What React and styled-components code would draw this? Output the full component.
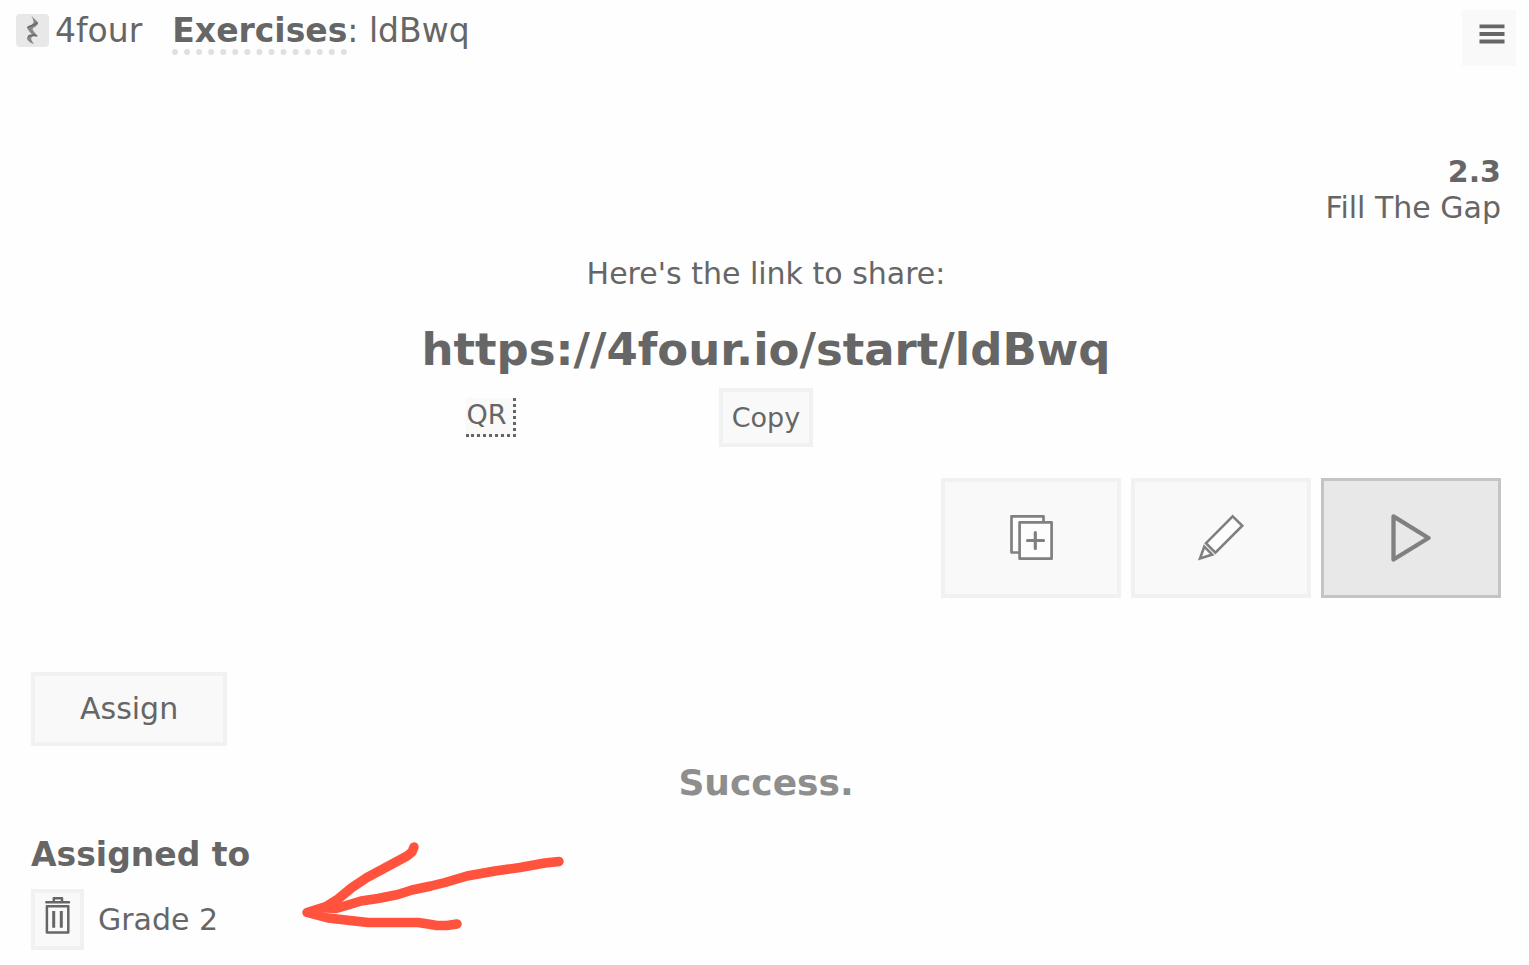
import React from 'react';
import styled, { createGlobalStyle, css } from 'styled-components';

const GlobalStyle = createGlobalStyle`
  * {
    box-sizing: border-box;
  }

  body {
    margin: 0;
    background: #fefefe;
    color: #666;
    font-family: 'DejaVu Sans', Verdana, sans-serif;
    font-size: 30px;
    line-height: 36px;
  }
`;

const Page = styled.div`
  padding: 10px 13px 15px 16px;
`;

const Header = styled.header`
  display: flex;
  justify-content: space-between;
  align-items: flex-start;
  font-size: 33px;
  line-height: 41px;
`;

const Breadcrumb = styled.nav`
  display: flex;
  align-items: flex-start;
  gap: 30px;
`;

const Brand = styled.a`
  display: flex;
  align-items: center;
  gap: 6px;
  color: inherit;
  text-decoration: none;
`;

const SectionLink = styled.a`
  display: inline-block;
  color: inherit;
  font-weight: bold;
  line-height: 37px;
  text-decoration: none;
  border-bottom: 6px dotted #e0e0e0;
`;

const buttonBase = css`
  margin: 0;
  color: #666;
  background: #f9f9f9;
  font-family: inherit;
  cursor: pointer;

  svg {
    display: block;
  }
`;

const MenuButton = styled.button`
  ${buttonBase}
  padding: 13px 11px 21px 17px;
  border: 0;
`;

const Main = styled.main`
  padding: 88px 15px 0;
`;

const Exercise = styled.div`
  text-align: right;
`;

const Share = styled.section`
  margin-top: 30px;
  text-align: center;

  p {
    margin: 0;
  }
`;

const ShareUrl = styled.h1`
  margin: 30px 0 11px;
  font-size: 45px;
  line-height: 55px;
`;

const ShareActions = styled.div`
  display: grid;
  grid-template-columns: repeat(3, 1fr);
  justify-items: center;
  align-items: center;
  max-width: 825px;
  margin: 0 auto;
`;

const QrButton = styled.button`
  ${buttonBase}
  padding: 0 6px 3px 0;
  border: 0 dotted #666;
  border-width: 0 3px 3px 0;
  font-size: 27px;
  line-height: 33px;
`;

const Button = styled.button`
  ${buttonBase}
  padding: ${props => (props.$small ? '9px' : '15px 45px')};
  border: 4px solid #f1f1f1;
  font-size: ${props => (props.$small ? '27px' : '30px')};
  line-height: ${props => (props.$small ? '33px' : '36px')};
`;

const Toolbar = styled.div`
  display: flex;
  justify-content: flex-end;
  gap: 10px;
  margin: 31px 0 74px;
`;

const ToolButton = styled.button`
  ${buttonBase}
  display: flex;
  align-items: center;
  justify-content: center;
  width: 180px;
  height: 120px;
  padding: 0;
  color: #808080;
  background: ${props => (props.$primary ? '#e8e8e8' : '#f9f9f9')};
  border: ${props => (props.$primary ? '3px solid #c4c4c4' : '4px solid #f1f1f1')};
`;

const Status = styled.p`
  margin: 15px 0 0;
  color: #8e8e8e;
  font-size: 36px;
  font-weight: bold;
  line-height: 43px;
  text-align: center;
`;

const Assigned = styled.section`
  position: relative;
  margin-top: 31px;

  h2 {
    margin: 0 0 14px;
    font-size: 33px;
    line-height: 40px;
  }

  ul {
    margin: 0;
    padding: 0;
    list-style: none;
  }
`;

const Group = styled.li`
  display: flex;
  align-items: center;
  gap: 14px;
`;

const DeleteButton = styled.button`
  ${buttonBase}
  padding: 3px 9px 12px;
  border: 4px solid #f1f1f1;
`;

const Arrow = styled.svg`
  position: absolute;
  top: 5px;
  left: 269px;
  pointer-events: none;
`;

const LogoIcon = () => (
  <svg width="33" height="33" viewBox="0 0 33 33" aria-hidden="true">
    <rect width="33" height="33" rx="4" fill="#e8e8e8" />
    <path
      d="M15.300 1.500C17.500 4.500 22 7 22 9.500C21 12.500 17.500 13 16.500 15C17 17.500 20 19.500 22 22.500C17.500 21 14 23 15.500 26C16 27.500 17 28.500 18 30C14 29 10.500 26 11 23.500C12 21.500 14.500 21 16.500 21C15 19 12 17 11 13.500C12.500 11.500 17 11 17.500 8.500C17.500 6 16.500 4 15.300 1.500Z"
      fill="#888"
    />
    <path d="M21.500 8.500C19 11.500 15 11 11.500 13.500M12 22.500C14.500 20.500 18 21 21 22" fill="none" stroke="#666" strokeWidth="1.500" />
  </svg>
);

const MenuIcon = () => (
  <svg width="26" height="22" viewBox="0 0 26 22" stroke="currentColor" strokeWidth="3.8" aria-hidden="true">
    <path d="M0.500 3.300H25.500M0.500 11H25.500M0.500 18.500H25.500" />
  </svg>
);

const DuplicateIcon = () => (
  <svg width="48" height="48" viewBox="0 0 48 48" fill="#fdfdfd" stroke="currentColor" strokeWidth="2.7" strokeLinejoin="round" strokeLinecap="round" aria-hidden="true">
    <path d="M12.800 38.500H4.500V2.300H36.500V8.300" />
    <rect x="12.600" y="8.300" width="32" height="36.400" />
    <path d="M28.300 18.500V34.500M20.500 26.500H36.500" strokeWidth="3.2" />
  </svg>
);

const EditIcon = () => (
  <svg width="48" height="48" viewBox="0 0 48 48" fill="#fdfdfd" stroke="currentColor" strokeWidth="2.600" aria-hidden="true">
    <path d="M35.700 2.400L45.300 11.700L18.400 38.600L9 29.200Z" />
    <path d="M7.300 32.600L15.200 40.600L3 44.500Z" />
  </svg>
);

const PlayIcon = () => (
  <svg width="48" height="48" viewBox="0 0 48 48" fill="none" stroke="currentColor" strokeWidth="4.300" strokeLinejoin="round" aria-hidden="true">
    <path d="M6.500 2.300L41.500 24L6.500 45.500Z" />
  </svg>
);

const TrashIcon = () => (
  <svg width="27" height="38" viewBox="0 0 27 38" fill="none" stroke="currentColor" strokeWidth="2.500" strokeLinejoin="round" strokeLinecap="round" aria-hidden="true">
    <path d="M2.300 6.300H25M9.800 6V2.300H18V6" />
    <path d="M2.900 10.300H24.300V36.500H2.900Z" />
    <path d="M9.700 15V31.700M17.300 15V31.700" strokeWidth="3" strokeLinecap="butt" />
  </svg>
);

const App = () => {
  const groups = ['Grade 2'];

  return (
    <>
      <GlobalStyle />
      <Page>
        <Header>
          <Breadcrumb>
            <Brand href="#home">
              <LogoIcon />
              4four
            </Brand>
            <div>
              <SectionLink href="#exercises">Exercises</SectionLink>: ldBwq
            </div>
          </Breadcrumb>
          <MenuButton type="button" aria-label="Menu">
            <MenuIcon />
          </MenuButton>
        </Header>

        <Main>
          <Exercise>
            <strong>2.3</strong>
            <div>Fill The Gap</div>
          </Exercise>

          <Share>
            <p>Here's the link to share:</p>
            <ShareUrl>https://4four.io/start/ldBwq</ShareUrl>
            <ShareActions>
              <QrButton type="button">QR</QrButton>
              <Button type="button" $small>Copy</Button>
            </ShareActions>
          </Share>

          <Toolbar>
            <ToolButton type="button" aria-label="Duplicate">
              <DuplicateIcon />
            </ToolButton>
            <ToolButton type="button" aria-label="Edit">
              <EditIcon />
            </ToolButton>
            <ToolButton type="button" aria-label="Play" $primary>
              <PlayIcon />
            </ToolButton>
          </Toolbar>

          <Button type="button">Assign</Button>
          <Status role="status">Success.</Status>

          <Assigned>
            <h2>Assigned to</h2>
            <ul>
              {groups.map(group => (
                <Group key={group}>
                  <DeleteButton type="button" aria-label={`Remove ${group}`}>
                    <TrashIcon />
                  </DeleteButton>
                  {group}
                </Group>
              ))}
            </ul>
            <Arrow width="270" height="96" viewBox="0 0 270 96" fill="none" stroke="#ff533d" strokeWidth="9.500" strokeLinecap="round" strokeLinejoin="round" aria-hidden="true">
              <path d="M114 7L112 12L107 16L94 23L82 29.500L67 37.500L52 47.500L38 59L26 66.500L7 72.500L28 78L50 80.500L68 82.500H118L128 84L137 85.500H147L157 84" />
              <path d="M259 21.500L245 23L220 27.500L195 31L167 36L145 42.500L131 46L112 50L98 54.500L78 58.500L61 61L48 65L36 68.500L27 68" />
            </Arrow>
          </Assigned>
        </Main>
      </Page>
    </>
  );
};

export default App;
